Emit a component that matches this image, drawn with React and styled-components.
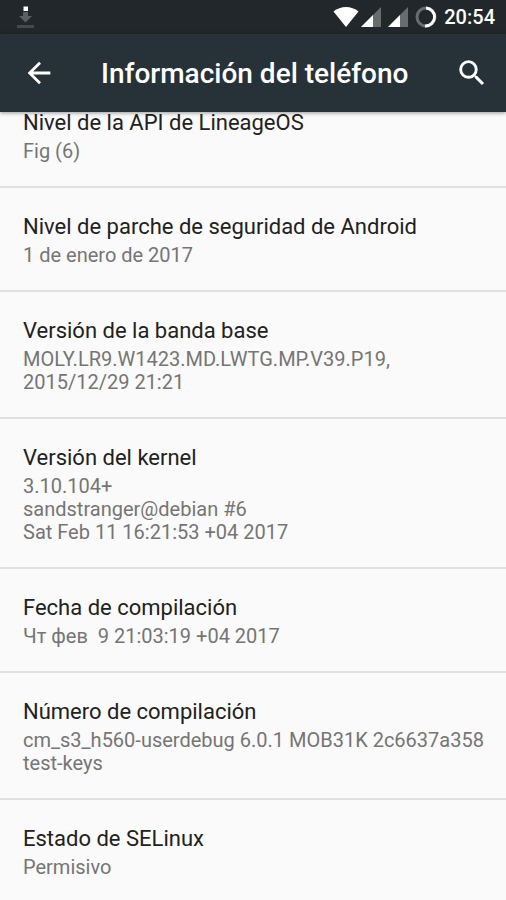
import React from "react";
import styled, { createGlobalStyle } from "styled-components";

const GlobalStyle = createGlobalStyle`
  * {
    box-sizing: border-box;
  }

  html,
  body,
  #root {
    height: 100%;
    margin: 0;
  }

  body {
    background: #fafafa;
    font-family: Roboto, "Noto Sans", sans-serif;
  }
`;

const Screen = styled.div`
  height: 100%;
  display: flex;
  flex-direction: column;
  overflow: hidden;
`;

const StatusBar = styled.div`
  flex: none;
  height: 34px;
  padding: 0 11px 0 17px;
  display: flex;
  align-items: center;
  background: #21272b;

  svg {
    display: block;
  }
`;

const StatusIcons = styled.div`
  margin-left: auto;
  display: flex;
  align-items: center;
  gap: 7px;
`;

const Radios = styled.div`
  display: flex;
  gap: 2px;
`;

const Clock = styled.time`
  color: #fff;
  font-size: 20px;
  font-weight: 500;
  line-height: 34px;
`;

const AppBar = styled.header`
  flex: none;
  z-index: 1;
  height: 78px;
  padding: 0 17px 0 22px;
  display: flex;
  align-items: center;
  background: #263238;
  box-shadow: 0 1px 4px rgba(0, 0, 0, 0.4);
`;

const Title = styled.h1`
  flex: 1;
  margin: 0;
  padding: 2px 0 0 45px;
  color: #fff;
  font-size: 28px;
  font-weight: 500;
  line-height: 36px;
  white-space: nowrap;
`;

const IconButton = styled.button`
  width: 34px;
  height: 34px;
  padding: 0;
  border: 0;
  background: none;
  color: #fff;

  svg {
    display: block;
    fill: currentColor;
  }
`;

const Viewport = styled.main`
  flex: 1;
  min-height: 0;
  overflow: hidden;
`;

/* the list is scrolled a little under the app bar */
const List = styled.dl`
  margin: -28px 0 0;
`;

const Item = styled.div`
  padding: 22px 16px 23px 23px;
  border-bottom: 2px solid #e0e0e0;

  &:last-child {
    border-bottom: 0;
  }
`;

const Name = styled.dt`
  color: #212121;
  font-size: 22px;
  line-height: 34px;
`;

const Value = styled.dd`
  margin: 0;
  color: #757575;
  font-size: 20px;
  line-height: 23px;
  white-space: pre-wrap;
`;

const DownloadIcon = () => (
  <svg width="17" height="24" viewBox="0 0 17 24">
    <path d="M6 7h5v4h4l-6.500 6.500L2 11h4z" fill="#5a5f62" />
    <path d="M6.500 1.500h4.500v4.500H6.500z" fill="#fff" />
    <path d="M0 20h17v3H0z" fill="#43494d" />
  </svg>
);

const WifiIcon = () => (
  <svg width="26" height="20" viewBox="0 0 26 20">
    <path d="M13 20 .5 4.500C4 1.500 8.500 0 13 0s9 1.500 12.500 4.500z" fill="#fff" />
  </svg>
);

const SignalIcon = () => (
  <svg width="20" height="20" viewBox="0 0 20 20">
    <path d="M0 20 20 0v20z" fill="#686c6f" />
    <path d="M0 20 12 8v12z" fill="#fff" />
  </svg>
);

const BatteryIcon = () => (
  <svg width="22" height="22" viewBox="0 0 22 22" fill="none" strokeWidth="3">
    <circle cx="11" cy="11" r="9" stroke="#686c6f" />
    <path d="M11 2a9 9 0 1 1-1 18" stroke="#fff" />
  </svg>
);

const items = [
  ["Nivel de la API de LineageOS", "Fig (6)"],
  ["Nivel de parche de seguridad de Android", "1 de enero de 2017"],
  ["Versión de la banda base", "MOLY.LR9.W1423.MD.LWTG.MP.V39.P19,\n2015/12/29 21:21"],
  ["Versión del kernel", "3.10.104+\nsandstranger@debian #6\nSat Feb 11 16:21:53 +04 2017"],
  ["Fecha de compilación", "Чт фев  9 21:03:19 +04 2017"],
  ["Número de compilación", "cm_s3_h560-userdebug 6.0.1 MOB31K 2c6637a358 test-keys"],
  ["Estado de SELinux", "Permisivo"],
];

const App = () => (
  <>
    <GlobalStyle />
    <Screen>
      <StatusBar>
        <DownloadIcon />
        <StatusIcons>
          <Radios>
            <WifiIcon />
            <SignalIcon />
          </Radios>
          <SignalIcon />
          <BatteryIcon />
          <Clock dateTime="20:54">20:54</Clock>
        </StatusIcons>
      </StatusBar>
      <AppBar>
        <IconButton type="button" aria-label="Atrás">
          <svg width="34" height="34" viewBox="0 0 24 24">
            <path d="M20 11H7.83l5.59-5.59L12 4l-8 8 8 8 1.41-1.41L7.83 13H20v-2z" />
          </svg>
        </IconButton>
        <Title>Información del teléfono</Title>
        <IconButton type="button" aria-label="Buscar">
          <svg width="34" height="34" viewBox="0 0 24 24">
            <path d="M15.5 14h-.79l-.28-.27A6.47 6.47 0 0 0 16 9.5 6.5 6.5 0 1 0 9.5 16c1.61 0 3.09-.59 4.23-1.57l.27.28v.79l5 4.99L20.49 19l-4.99-5zm-6 0a4.5 4.5 0 1 1 0-9 4.5 4.5 0 0 1 0 9z" />
          </svg>
        </IconButton>
      </AppBar>
      <Viewport>
        <List>
          {items.map(([name, value]) => (
            <Item key={name}>
              <Name>{name}</Name>
              <Value>{value}</Value>
            </Item>
          ))}
        </List>
      </Viewport>
    </Screen>
  </>
);

export default App;
